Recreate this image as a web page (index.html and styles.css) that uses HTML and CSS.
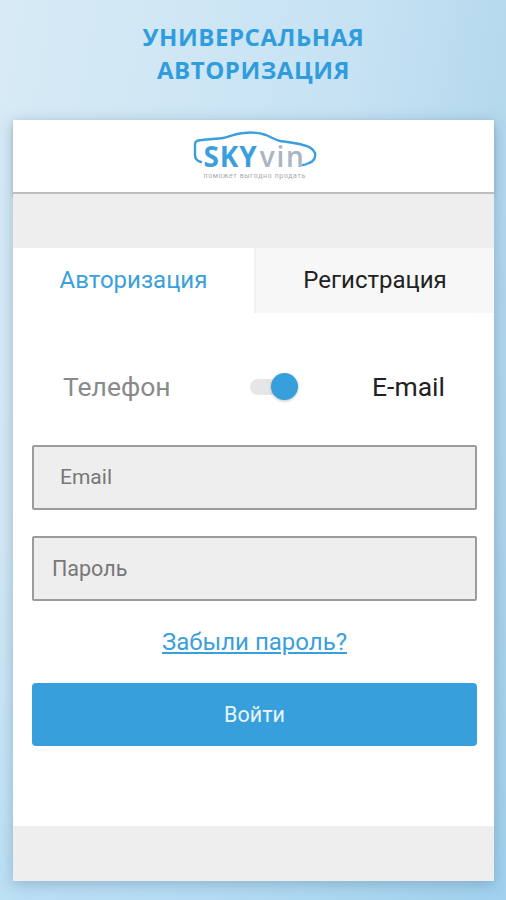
FILE: index.html
```html
<!DOCTYPE html>
<html lang="en">
<head>
    <meta charset="UTF-8">
    <meta name="viewport" content="width=device-width, initial-scale=1.0">
    <title>Авторизация</title>
    <link rel="stylesheet" href="styles.css">
</head>
<body>
    <h1 class="promo-title">УНИВЕРСАЛЬНАЯ<br>АВТОРИЗАЦИЯ</h1>

    <main class="phone">
        <header class="app-header">
            <div class="logo">
                <svg class="logo-car" width="128" height="40" viewBox="0 0 128 40" fill="none">
                    <path d="M11 32 C7 31 5 28 5 25 L5 14 C5 11 8 10 12 10 C20 9 27 9 33 8 C40 7 46 3 54 3 C62 2 70 3 76 5 C81 7 85 10 90 11 C98 12 107 13 113 15 C119 16 123 19 125 23 C126 28 123 32 119 33 C117 34 115 35 113 35" stroke="#3a9fdc" stroke-width="2.4" stroke-linecap="round"/>
                </svg>
                <div class="logo-word"><span class="logo-sky">SKY</span><span class="logo-vin">vin</span></div>
                <div class="logo-tagline">поможет выгодно продать</div>
            </div>
        </header>

        <div class="grey-strip"></div>

        <nav class="tabs">
            <div class="tab tab-active">Авторизация</div>
            <div class="tab">Регистрация</div>
        </nav>

        <section class="login-form">
            <div class="switch-row">
                <span class="switch-label switch-off">Телефон</span>
                <span class="switch">
                    <span class="switch-track"></span>
                    <span class="switch-thumb"></span>
                </span>
                <span class="switch-label">E-mail</span>
            </div>

            <div class="field field-email">Email</div>
            <div class="field">Пароль</div>

            <a class="forgot" href="#">Забыли пароль?</a>

            <button class="login-button" type="button">Войти</button>
        </section>

        <div class="footer-strip"></div>
    </main>
</body>
</html>
```

FILE: styles.css
```css
/* Store screenshot: blue backdrop with the app card on top */
html, body {
    height: 100%;
}

body {
    margin: 0;
    height: 900px;
    overflow: hidden;
    box-sizing: border-box;
    padding: 20px 12px 0 13px;
    font-family: Roboto, "Liberation Sans", sans-serif;
    background:
        linear-gradient(180deg, rgba(255, 255, 255, 0) 60%, rgba(150, 210, 245, 0.35) 100%),
        linear-gradient(100deg, #d8ebf6 0%, #c6e2f3 55%, #a6d0e9 100%);
}

.promo-title {
    margin: 0 0 34px;
    text-align: center;
    font-family: "Open Sans", "Liberation Sans", sans-serif;
    font-size: 24px;
    font-weight: 700;
    line-height: 33px;
    letter-spacing: 0.55px;
    color: #2f9ddd;
}

.phone {
    height: 761px;
    display: flex;
    flex-direction: column;
    background-color: #fff;
    box-shadow: 0 3px 14px rgba(60, 100, 130, 0.35);
}

.app-header {
    height: 74px;
    flex: none;
    display: flex;
    justify-content: center;
    background-color: #fff;
    border-bottom: 2px solid #bdbdbd;
    box-sizing: border-box;
    box-shadow: 0 2px 4px rgba(0, 0, 0, 0.14);
}

.logo {
    position: relative;
    width: 128px;
    height: 100%;
}

.logo-car {
    position: absolute;
    left: 0;
    top: 10px;
}

.logo-word {
    position: absolute;
    left: 14px;
    top: 23px;
    display: flex;
    font-family: "Open Sans", "Liberation Sans", sans-serif;
    font-size: 28px;
    line-height: 26px;
    white-space: nowrap;
}

.logo-sky {
    font-weight: 700;
    letter-spacing: 0.9px;
    color: #3a9fdc;
}

.logo-vin {
    margin-left: 2px;
    font-weight: 600;
    letter-spacing: 1.8px;
    color: #a9b4c4;
}

.logo-tagline {
    position: absolute;
    left: 14px;
    top: 52px;
    font-size: 7px;
    line-height: 9px;
    letter-spacing: 0.62px;
    white-space: nowrap;
    color: #a8a8b0;
}

.grey-strip {
    height: 54px;
    flex: none;
    background-color: #efeeee;
}

.tabs {
    height: 65px;
    flex: none;
    display: flex;
}

.tab {
    flex: 1;
    display: flex;
    align-items: center;
    justify-content: center;
    font-size: 24px;
    padding-bottom: 2px;
    color: #222;
    background-color: #f7f7f7;
    box-sizing: border-box;
}

.tab-active {
    flex: none;
    width: 243px;
    color: #3a9fdc;
    background-color: #fff;
    border-right: 2px solid #f0f0f0;
}

.login-form {
    flex: 1;
    display: flex;
    flex-direction: column;
    padding: 0 17px 0 19px;
}

.switch-row {
    height: 132px;
    flex: none;
    position: relative;
    display: flex;
    align-items: center;
    justify-content: space-between;
    padding: 15px 32px 0 31px;
    box-sizing: border-box;
}

.switch-label {
    font-size: 26.5px;
    color: #222;
}

.switch-off {
    color: #8a8a8a;
}

.switch {
    position: relative;
    width: 50px;
    height: 28px;
    margin-left: 8px;
}

.switch-track {
    position: absolute;
    left: 0;
    top: 6px;
    width: 42px;
    height: 16px;
    border-radius: 8px;
    background-color: #e6e6e6;
}

.switch-thumb {
    position: absolute;
    left: 21px;
    top: 0;
    width: 27px;
    height: 27px;
    border-radius: 50%;
    background-color: #389fdd;
    box-shadow: 0 1px 3px rgba(0, 0, 0, 0.25);
}

.field {
    height: 65px;
    flex: none;
    display: flex;
    align-items: center;
    box-sizing: border-box;
    padding: 0 0 1px 18px;
    font-size: 21.5px;
    color: #777;
    background-color: #efeeee;
    border: 2px solid #9b9b9b;
    border-radius: 2px;
}

.field-email {
    padding-left: 26px;
    margin-bottom: 26px;
    font-size: 21px;
}

.forgot {
    align-self: center;
    margin-top: 26px;
    font-size: 24px;
    line-height: 30px;
    color: #3a9fdc;
}

.login-button {
    height: 63px;
    flex: none;
    margin-top: 26px;
    border: none;
    border-radius: 4px;
    font-family: inherit;
    font-size: 21.5px;
    padding: 0;
    color: #e8f5fd;
    background-color: #389fdd;
}

.footer-strip {
    height: 55px;
    flex: none;
    background-color: #efeeee;
}
```
